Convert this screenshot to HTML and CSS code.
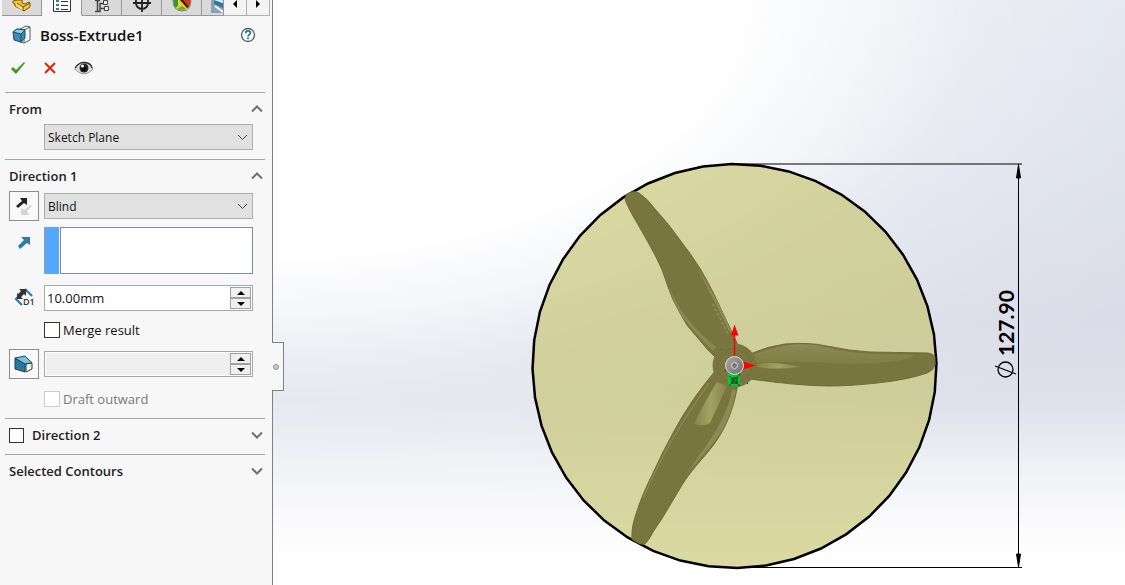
FILE: index.html
```html
<!DOCTYPE html>
<html lang="en">
<head>
<meta charset="utf-8">
<title>Boss-Extrude1</title>
<link rel="stylesheet" href="styles.css">
</head>
<body>
<div class="app">
  <aside class="panel">
    <nav class="tabs" aria-label="Manager tabs">
      <button class="tab" aria-label="Feature tree"><svg width="20" height="14" viewBox="0 0 20 14"><path d="M5 0h5v3l3 1 4-2 1 1v4l-6 4L3 6V4L1 3V1z" fill="#f3c53c" stroke="#7a5200"/><path d="M11 7v4l-7-5V4z" fill="#fbe08a"/><path d="M11 11V7l7-4M11 7L5 3" fill="none" stroke="#7a5200"/></svg></button>
      <button class="tab tab-active" aria-label="Property manager"><svg width="18" height="14" viewBox="0 0 18 14"><path d="M.500 0v11.500h17V0" fill="#fff" stroke="#333"/><path d="M3 0h3v2H3zM3 4h3v2H3zM3 8h3v2H3z" fill="#2f7ea5"/><path d="M8 1.500h7M8 5.500h7M8 9.500h7" stroke="#333"/></svg></button>
      <button class="tab" aria-label="Configuration manager"><svg width="18" height="14" viewBox="0 0 18 14"><path d="M2 .500h5M4.500 0v11M2 11.500h5V3.500h4M7 8.500h4" fill="none" stroke="#444" stroke-width="1.500"/><path d="M10.500.500h4v4h-4zM11.500 6.500h4v4h-4z" fill="#eee" stroke="#444"/></svg></button>
      <button class="tab" aria-label="Dimension manager"><svg width="20" height="14" viewBox="0 0 20 14"><path d="M4 0v3a6 6 0 0 0 12 0V0M1 3h18M10 0v12" fill="none" stroke="#222" stroke-width="1.800"/></svg></button>
      <button class="tab" aria-label="Display manager"><svg width="20" height="14" viewBox="0 0 20 14"><path d="M1 0h18q0 11-9 11T1 0z" fill="#f5c928"/><path d="M1 0h5v6l-3 2Q1 5 1 0z" fill="#2f9b34"/><path d="M9 0h10q0 4-2 7z" fill="#d8341f"/><path d="M8 0h3l6 7-2 1z" fill="#222"/><path d="M5 9l5-3 4 3q-4 3-9 0z" fill="#58b53a"/><path d="M1 0q0 11 9 11t9-11" fill="none" stroke="#888"/></svg></button>
      <button class="tab tab-cut" aria-label="CAM manager"><svg width="12" height="14" viewBox="0 0 12 14"><path d="M0 0h12v13H0z" fill="#8d9db5"/><path d="M3 0l9 3v5L3 4z" fill="#2b7aa5"/><path d="M3 0h8l1 1v2z" fill="#d8eef6"/><path d="M4 6l8 6" stroke="#fff" stroke-width="2"/></svg></button>
      <button class="tab-arrow" aria-label="Previous tabs"><svg width="6" height="8" viewBox="0 0 6 8"><path d="M5 0v8L1 4z"/></svg></button>
      <button class="tab-arrow" aria-label="Next tabs"><svg width="6" height="8" viewBox="0 0 6 8"><path d="M1 0v8l4-4z"/></svg></button>
    </nav>

    <header class="title-row">
      <svg class="feature-icon" width="20" height="20" viewBox="0 0 20 20"><path d="M8 4l6-3 4 1v13l-6 3-4-1z" fill="#fff" stroke="#555"/><path d="M12 5v13M12 5l6-3" stroke="#555" fill="none"/><path d="M1 7l4-3 8 1v8l-4 4-7-2z" fill="#3d8bb0" stroke="#17506e"/><path d="M1 7l4-3 8 1-4 4z" fill="#8fd0e6" stroke="#17506e"/><path d="M9 9v8" stroke="#17506e"/></svg>
      <h1 class="title">Boss-Extrude1</h1>
      <button class="plain" aria-label="Help"><svg width="16" height="16" viewBox="0 0 16 16"><circle cx="8" cy="8" r="6.500" fill="#fff" stroke="#4a5d68" stroke-width="1.300"/><path d="M5.700 6.200q0-2.400 2.300-2.400t2.400 2q0 1.200-1.200 1.900T8 9.500" fill="none" stroke="#2478a2" stroke-width="1.700"/><path d="M7.100 10.600h1.800v1.700H7.100z" fill="#2478a2"/></svg></button>
    </header>

    <div class="actions">
      <button class="plain" aria-label="OK"><svg width="16" height="14" viewBox="0 0 16 14"><path d="M1 8l2-2 3 3 8-8 1 1-9 11z" fill="#35a013"/></svg></button>
      <button class="plain" aria-label="Cancel"><svg width="14" height="14" viewBox="0 0 14 14"><path d="M2 2l10 10M12 2L2 12" stroke="#e32400" stroke-width="2"/></svg></button>
      <button class="plain" aria-label="Detailed preview"><svg width="20" height="14" viewBox="0 0 20 14"><path d="M1 8Q4 2 10 2t9 6q-4 5-9 5T1 8z" fill="#ddd" stroke="#999"/><path d="M1 7Q5 1 11 1.500T18 7" fill="none" stroke="#333" stroke-width="1.300"/><circle cx="10" cy="7" r="4.500" fill="#222"/><circle cx="10" cy="8" r="2" fill="#000"/><circle cx="8.500" cy="5" r="1.500" fill="#fff"/></svg></button>
    </div>

    <section class="group group-from">
      <div class="group-head"><h2>From</h2><button class="plain" aria-label="Collapse From"><svg width="12" height="8" viewBox="0 0 12 8"><path class="chevron" d="M1 6.500l5-5 5 5"/></svg></button></div>
      <div class="row row-select"><select aria-label="Start condition"><option>Sketch Plane</option></select></div>
    </section>

    <section class="group">
      <div class="group-head"><h2>Direction 1</h2><button class="plain" aria-label="Collapse Direction 1"><svg width="12" height="8" viewBox="0 0 12 8"><path class="chevron" d="M1 6.500l5-5 5 5"/></svg></button></div>
      <div class="row">
        <button class="tool" aria-label="Reverse direction"><svg width="20" height="22" viewBox="0 0 20 22"><path d="M2 11l6-5-2-3h7v7l-3-2-6 5z" fill="#222"/><path d="M18 11l-5 5 2 4H7v-7l3 2 6-5z" fill="#d4d4d4"/></svg></button>
        <select aria-label="End condition"><option>Blind</option></select>
      </div>
      <div class="row row-list">
        <svg class="row-icon" width="30" height="30" viewBox="0 0 30 30"><path d="M9 19l6-6-3-3h9v8l-3-2-7 6z" fill="#2b7da3"/></svg>
        <div class="selection"><span class="swatch"></span><textarea aria-label="Direction of extrusion"></textarea></div>
      </div>
      <div class="row">
        <svg class="row-icon" width="30" height="26" viewBox="0 0 30 26"><path d="M13 20l-6-6 4-4M16 4l7 7" fill="none" stroke="#2b7da3" stroke-width="2.200"/><path d="M8 8v6h6l-2-2 3-3 2 2V4h-7l2 2-3 3z" fill="#333"/><text class="d1" x="14" y="20">D1</text></svg>
        <div class="spin"><input type="text" value="10.00mm" aria-label="Depth"><span class="steps"><button aria-label="Increase depth"><svg width="8" height="4" viewBox="0 0 8 4"><path d="M0 4h8L4 0z"/></svg></button><button aria-label="Decrease depth"><svg width="8" height="4" viewBox="0 0 8 4"><path d="M0 0h8L4 4z"/></svg></button></span></div>
      </div>
      <label class="check"><input type="checkbox">Merge result</label>
      <div class="row">
        <button class="tool" aria-label="Draft on/off"><svg width="20" height="20" viewBox="0 0 20 20"><path d="M1 4l10 6v8L1 15z" fill="#2b769b" stroke="#17455c"/><path d="M1 4l10-2 7 7-7 1z" fill="#74c4e0" stroke="#17455c"/><path d="M12 10l6-1v6l-6 3z" fill="#f2f2f2" stroke="#333"/></svg></button>
        <div class="spin spin-off"><input type="text" disabled aria-label="Draft angle"><span class="steps"><button aria-label="Increase angle"><svg width="8" height="4" viewBox="0 0 8 4"><path d="M0 4h8L4 0z"/></svg></button><button aria-label="Decrease angle"><svg width="8" height="4" viewBox="0 0 8 4"><path d="M0 0h8L4 4z"/></svg></button></span></div>
      </div>
      <label class="check check-off"><input type="checkbox" disabled>Draft outward</label>
    </section>

    <section class="group group-closed">
      <div class="group-head"><label class="head-check"><input type="checkbox">Direction 2</label><button class="plain" aria-label="Expand Direction 2"><svg width="12" height="8" viewBox="0 0 12 8"><path class="chevron" d="M1 1.500l5 5 5-5"/></svg></button></div>
    </section>

    <section class="group group-closed">
      <div class="group-head"><h2>Selected Contours</h2><button class="plain" aria-label="Expand Selected Contours"><svg width="12" height="8" viewBox="0 0 12 8"><path class="chevron" d="M1 1.500l5 5 5-5"/></svg></button></div>
    </section>

    <button class="handle" aria-label="Hide panel"><span class="dot"></span></button>
  </aside>

  <main class="viewport">
    <svg class="scene" viewBox="273 0 852 585" role="img" aria-label="Propeller with a circular sketch">
      <defs>
        <linearGradient id="shine" x1="0" y1="0" x2="0" y2="1"><stop offset="0" stop-color="#8d8b54"/><stop offset="1" stop-color="#7f7d46"/></linearGradient>
        <linearGradient id="glint" x1="0" y1="0" x2="1" y2="0"><stop offset="0" stop-color="#86844b"/><stop offset=".5" stop-color="#a3a166"/><stop offset="1" stop-color="#85834a"/></linearGradient>
        <linearGradient id="ball" x1="0" y1="0" x2="1" y2="1"><stop offset="0" stop-color="#aaa"/><stop offset="1" stop-color="#707070"/></linearGradient>
      </defs>
      <polygon class="disc" transform="translate(734.5 366) rotate(-0.8)" points="0,-202 28.700,-199.900 56.900,-193.800 83.900,-183.700 109.200,-169.900 132.300,-152.700 152.700,-132.300 169.900,-109.200 183.700,-83.900 193.800,-56.900 199.900,-28.700 202,0 199.900,28.700 193.800,56.900 183.700,83.900 169.900,109.200 152.700,132.300 132.300,152.700 109.200,169.900 83.900,183.700 56.900,193.800 28.700,199.900 0,202 -28.700,199.900 -56.900,193.800 -83.900,183.700 -109.200,169.900 -132.300,152.700 -152.700,132.300 -169.900,109.200 -183.700,83.900 -193.800,56.900 -199.900,28.700 -202,0 -199.900,-28.700 -193.800,-56.900 -183.700,-83.900 -169.900,-109.200 -152.700,-132.300 -132.300,-152.700 -109.200,-169.900 -83.900,-183.700 -56.900,-193.800 -28.700,-199.900"/>

      <path class="blade" d="M625 199L627 194Q634 190 639 193Q648 199 655 209Q669 224 680 240Q691 254 701 270Q713 291 720 307Q730 328 738 345L720 362Q707 350 697 337Q686 326 680 313Q672 300 667 284Q663 270 656 257Q646 238 637 223Q627 206 625 199z"/>
      <path d="M669 287Q674 305 683 318Q697 336 713 351L716 347Q701 335 687 318Q676 304 669 287z" fill="#8a8850"/>
      <path d="M697 267Q717 297 732 333L729 331Q716 304 697 267z" fill="#8e8c55"/>
      <path d="M713 304l10 20 5 10" fill="none" stroke="#a09e69" stroke-dasharray="3 2"/>
      <path class="blade" d="M750 354Q768 346 785 344Q808 342 827 346Q850 351 870 352L928 353Q934 354 935 357L935 365Q934 370 927 373Q907 380 877 383Q850 386 830 386Q800 386 750 379z"/>
      <path d="M752 355Q778 345 800 344Q819 344 838 350Q859 354 880 354L914 355Q910 359 895 361Q870 365 845 364Q805 360 752 363z" fill="url(#shine)"/>
      <path d="M757 364Q773 361 800 367Q778 370 757 367z" fill="url(#glint)"/>
      <path class="blade" d="M716 370Q702 387 693 400Q682 416 673 433Q662 453 653 473Q642 495 637 511Q631 527 632 539Q639 545 645 544Q649 540 653 532L663 517L682 485C694 466 707 455 717 440C727 425 732 410 735 398L738 384z"/>
      <path d="M717 382l10 4-17 37q-5 4-16 1q11-23 23-42z" fill="url(#glint)"/>
      <path d="M732 390h4C732 412 726 426 715 441C706 453 696 462 687 474C695 460 702 452 708 443C720 424 728 411 732 390z" fill="#8d8b53"/>
      <path d="M709 383Q666 443 643 498" fill="none" stroke="#93915b"/>
      <circle cx="734.500" cy="365.500" r="22" fill="#79773f"/>
      <circle cx="734.500" cy="365.500" r="17" fill="none" stroke="#716f3b"/>
      <path d="M728 374h12v12h-12z" fill="#00c93c"/>
      <path d="M729 386l11-12M729 376l11 10M732 378h5v5h-5z" fill="none" stroke="#102b12"/>
      <path d="M721 349h1v1h-1zM747 383h1v1h-1zM725 370h1v1h-1z" fill="#000"/>
      <path d="M734.500 357V334" stroke="#f00" stroke-width="1.500"/>
      <path d="M731 335.500l3.500-11 4 11zM743 361.500l13 4-13 4z" fill="#f00"/>
      <circle cx="734.500" cy="365.500" r="9" fill="url(#ball)" stroke="#ddd"/>
      <circle cx="734.500" cy="365.500" r="3" fill="#777" stroke="#ddd"/>

      <path class="dimension" d="M733 164h289M736 567.500h286M1018.500 164v403"/>
      <path d="M1018.500 165l2 13h-4zM1018.500 567l2-13h-4z" stroke="#000" fill="#000"/>
      <g fill="none" stroke="#000" stroke-width="1.300"><ellipse cx="1005.500" cy="369.500" rx="7.500" ry="7.500"/><path d="M995 366l21 8"/></g>
      <text class="measure" transform="translate(1014 356) rotate(-90)">127.90</text>
    </svg>
  </main>
</div>
</body>
</html>
```

FILE: styles.css
```css
* { box-sizing: border-box; }
body { margin: 0; font-family: "Open Sans", "Noto Sans", sans-serif; font-size: 13px; color: #111; }
button, input, select, textarea { font: inherit; color: inherit; margin: 0; border-radius: 0; }
button { padding: 0; }
svg { display: block; flex: none; }
.app { display: flex; min-height: 100vh; }
.panel { position: relative; flex: 0 0 273px; background: #f7f7f7; border-right: 1px solid #808080; }

.tabs { display: flex; height: 16px; margin: 0 2px; }
.tab, .tab-arrow { display: flex; justify-content: center; align-items: flex-start; border: solid #969696; border-width: 0 1px 1px 0; background: #d9d9d9; overflow: hidden; }
.tab { flex: 0 0 40px; }
.tab-active { background: #f7f7f7; border-bottom-color: #f7f7f7; }
.tab-cut { flex: 0 0 22px; justify-content: flex-end; }
.tab-arrow { flex: 1; background: #f4f4f4; border-color: #b0b0b0; }

.title-row { display: flex; align-items: center; gap: 8px; height: 38px; padding: 0 16px 0 12px; }
.title { flex: 1; margin: 0; font-size: 15px; font-weight: 600; color: #111; }
.plain { display: flex; border: 0; background: none; }
.actions { display: flex; align-items: center; gap: 17px; height: 28px; padding-left: 10px; margin-bottom: 10px; }

.group { margin: 0 7px 0 5px; padding: 7px 0 11px; border-top: 1px solid #a6a6a6; }
.group-from { padding-bottom: 9px; }
.group-head { display: flex; align-items: center; justify-content: space-between; height: 18px; padding: 0 2px 0 4px; font-weight: 600; color: #222; }
.group-head h2 { margin: 0; font-size: 13px; font-weight: 600; }
.chevron { fill: none; stroke: #707070; stroke-width: 2; }
.group-closed { padding: 7px 0 10px; }

.row { display: flex; align-items: center; gap: 5px; height: 30px; margin: 6px 12px 0 4px; }
.row-select { height: 26px; padding-left: 35px; }
select { appearance: none; flex: 1; min-width: 0; height: 26px; padding: 0 3px; font-size: 12px; border: 1px solid #adadad; background: #e1e1e1 no-repeat right 4px center; background-image: url("data:image/svg+xml,%3Csvg xmlns='http://www.w3.org/2000/svg' width='11' height='7'%3E%3Cpath d='M1 1l4.500 4.500L10 1' fill='none' stroke='%23444'/%3E%3C/svg%3E"); }
.tool { display: flex; flex: 0 0 30px; height: 30px; align-items: center; justify-content: center; border: 1px solid #8c8c8c; background: #f9f9f9; }
.row-list { height: 47px; align-items: flex-start; }
.row-icon { flex: 0 0 30px; }
.selection { display: flex; flex: 1; gap: 1px; height: 47px; }
.swatch { width: 15px; background: #55a8ff; border-left: 1px solid #999; }
textarea { flex: 1; min-width: 0; border: 1px solid #7d88a3; background: #fff; resize: none; }
.row-list + .row { margin-top: 9px; }
.d1 { font: 600 9px "Open Sans", sans-serif; fill: #333; }

.spin { display: flex; flex: 1; height: 26px; padding: 1px; border: 1px solid #a8a8ab; background: #fff; }
.spin input { flex: 1; min-width: 0; padding: 0 1px; border: 0; background: none; }
.spin-off input { background: #efefef; }
.steps { display: flex; flex-direction: column; width: 21px; }
.steps button { display: flex; flex: 1; align-items: center; justify-content: center; border: 1px solid #a0a0a0; background: #f0f0f0; }

.check, .head-check { display: flex; align-items: center; }
.check { gap: 3px; height: 16px; margin: 9px 0 0 39px; }
.check + .row { margin-top: 11px; }
.check-off { margin-top: 12px; color: #787878; }
.head-check { gap: 8px; }
input[type="checkbox"] { appearance: none; width: 16px; height: 16px; border: 1px solid #333; background: #fff; }
.head-check input[type="checkbox"] { width: 15px; height: 15px; }
.check-off input[type="checkbox"] { border-color: #ccc; }

.handle { position: absolute; left: 100%; top: 342px; width: 12px; height: 49px; border: 1px solid #808080; border-left: 0; background: #f7f7f7; }
.handle::before { content: ""; position: absolute; left: -1px; top: 0; width: 1px; height: 47px; background: #f7f7f7; }
.dot { display: block; width: 6px; height: 6px; margin-left: 1px; border: 1px solid #909090; border-radius: 50%; background: #ccc; }

.viewport { flex: 1; min-width: 0; background: radial-gradient(ellipse 92% 74% at 0 0, #fff 58%, rgba(255, 255, 255, .7) 74%, rgba(255, 255, 255, .3) 90%, rgba(255, 255, 255, .1) 110%, transparent 130%), linear-gradient(#e2e6ef 0, #dde1eb 30%, #dadde9 55%, #dee1eb 69%, #eff0f5 79%, #fbfbfc 90%, #fff 97%); }
.scene { width: 100%; height: 100%; }
.disc { fill: rgba(195, 193, 105, .62); stroke: #000; stroke-width: 2.500px; }
.blade { fill: #78763e; stroke: #6f6d38; stroke-width: 1px; }
.dimension { fill: none; stroke: #000; stroke-width: 1px; }
.measure { font: 700 21px Lato, sans-serif; fill: #000; }
```
